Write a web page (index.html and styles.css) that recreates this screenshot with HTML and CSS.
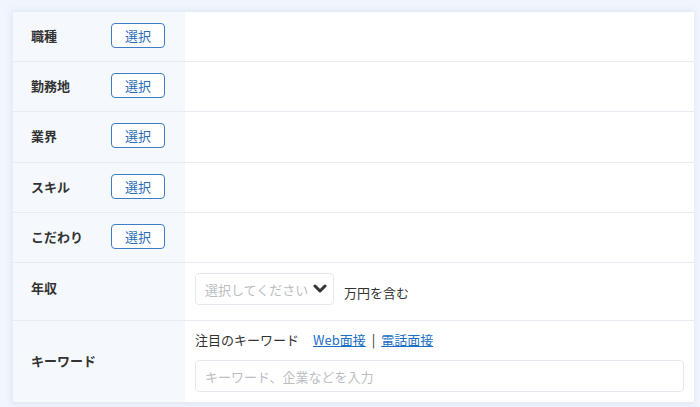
FILE: index.html
```html
<!DOCTYPE html>
<html lang="ja">
<head>
<meta charset="utf-8">
<link rel="stylesheet" href="styles.css">
</head>
<body>
<div class="card">
  <div class="row">
    <div class="label"><span class="name">職種</span><button class="btn">選択</button></div>
    <div class="value"></div>
  </div>
  <div class="row">
    <div class="label"><span class="name">勤務地</span><button class="btn">選択</button></div>
    <div class="value"></div>
  </div>
  <div class="row">
    <div class="label"><span class="name">業界</span><button class="btn">選択</button></div>
    <div class="value"></div>
  </div>
  <div class="row">
    <div class="label"><span class="name">スキル</span><button class="btn">選択</button></div>
    <div class="value"></div>
  </div>
  <div class="row">
    <div class="label"><span class="name">こだわり</span><button class="btn">選択</button></div>
    <div class="value"></div>
  </div>
  <div class="row row-income">
    <div class="label label-income"><span class="name">年収</span></div>
    <div class="value income">
      <div class="select"><span class="ph">選択してください</span><svg class="chev" viewBox="0 0 14 10" width="14" height="10"><path d="M2 2 L7 7 L12 2" fill="none" stroke="#333" stroke-width="3" stroke-linecap="round" stroke-linejoin="round"/></svg></div>
      <span class="unit">万円を含む</span>
    </div>
  </div>
  <div class="row row-keyword">
    <div class="label"><span class="name">キーワード</span></div>
    <div class="value keyword">
      <div class="hot">注目のキーワード<a class="link first" href="#">Web面接</a><span class="sep">|</span><a class="link" href="#">電話面接</a></div>
      <div class="input"><span class="ph">キーワード、企業などを入力</span></div>
    </div>
  </div>
</div>
</body>
</html>
```
FILE: styles.css
```css
html, body {
  margin: 0;
  padding: 0;
}
body {
  background: #f1f5fc;
  padding: 11px 6px 0 12px;
  font-family: "Noto Sans CJK JP", "Noto Sans", sans-serif;
  color: #333;
  height: 407px;
  box-sizing: border-box;
  overflow: hidden;
}
.card {
  background: #fff;
  border: 1px solid #e6ecf5;
  border-right: none;
  box-shadow: 0 0 6px rgba(180, 200, 235, 0.35);
  width: 682px;
  box-sizing: border-box;
}
.row {
  display: grid;
  grid-template-columns: 172px 1fr;
  height: 50px;
  border-bottom: 1px solid #e8ecf2;
  box-sizing: border-box;
}
.row:nth-child(3) { height: 51px; }
.row-income { height: 58px; }
.row-keyword { height: 82px; }
.label {
  background: #f5f9fe;
  display: flex;
  align-items: center;
  padding-left: 18px;
  padding-bottom: 3px;
}
.label-income { padding-bottom: 8px; }
.name {
  font-size: 13px;
  font-weight: bold;
  color: #333;
  width: 80px;
}
.btn {
  width: 54px;
  height: 25px;
  border: 1px solid #3d7dc5;
  border-radius: 4px;
  background: #fff;
  color: #2a6cb8;
  font-family: inherit;
  font-size: 13px;
  padding: 0;
  line-height: 1;
}
.value {
  display: flex;
  align-items: center;
}
.income {
  padding-left: 10px;
  padding-bottom: 5px;
  gap: 10px;
}
.select {
  width: 139px;
  height: 32px;
  box-sizing: border-box;
  border: 1px solid #e5e8ee;
  border-radius: 4px;
  display: flex;
  align-items: center;
  padding-left: 9px;
  gap: 5px;
  white-space: nowrap;
}
.ph {
  color: #bbbdc2;
  font-size: 13px;
  white-space: nowrap;
}
.chev { display: block; flex: none; }
.unit {
  font-size: 13px;
  color: #333;
  padding-top: 6px;
}
.keyword {
  flex-direction: column;
  align-items: flex-start;
  justify-content: flex-start;
  padding-left: 10px;
  padding-top: 9px;
}
.hot {
  font-size: 13px;
  color: #333;
  line-height: 20px;
}
.link {
  color: #1a6fc7;
  text-decoration: underline;
}
.link.first { margin-left: 14px; }
.sep { margin: 0 6px; color: #333; }
.input {
  margin-top: 10px;
  width: 489px;
  height: 32px;
  box-sizing: border-box;
  border: 1px solid #e5e8ee;
  border-radius: 4px;
  display: flex;
  align-items: center;
  padding-left: 9px;
}
```
